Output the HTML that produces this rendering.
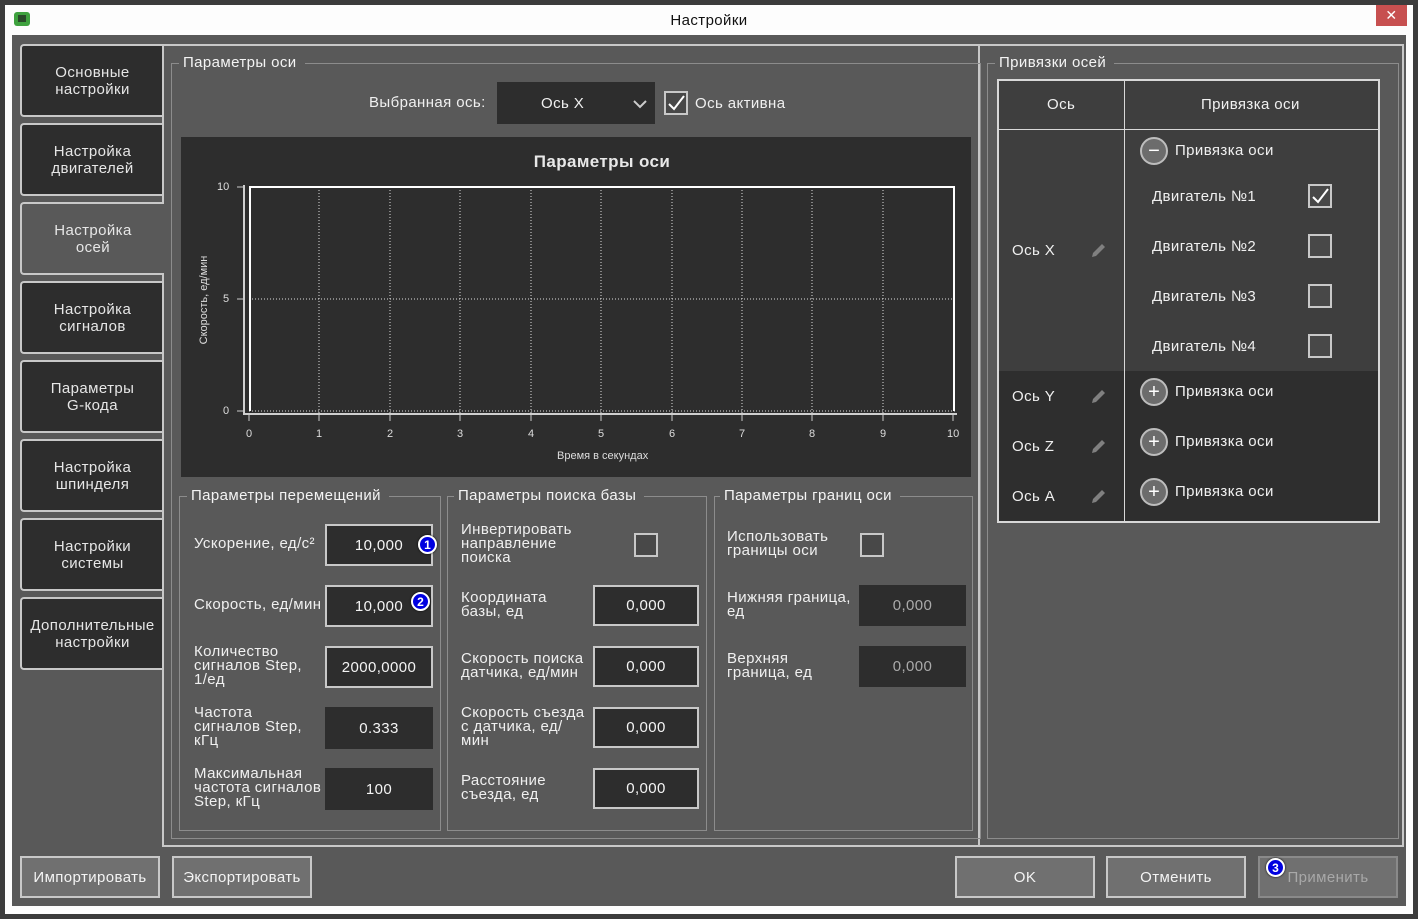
<!DOCTYPE html>
<html><head><meta charset="utf-8"><style>
*{margin:0;padding:0;box-sizing:border-box}
body{width:1418px;height:919px;background:#3c3c3c;font-family:"Liberation Sans","DejaVu Sans",sans-serif;font-size:15px;letter-spacing:0.4px;color:#f0f0f0;position:relative;overflow:hidden}
.a{position:absolute}
.tab{position:absolute;left:20px;width:143px;height:73px;background:#2d2d2d;border:2px solid #c8c8c8;border-right:none;border-radius:4px 0 0 4px;display:flex;align-items:center;justify-content:center;text-align:center;line-height:17px;color:#e6e6e6}
.gb{position:absolute;border:1px solid #8c8c8c}
.gt{position:absolute;background:#595959;padding:0 8px 0 4px;font-size:15px;color:#f4f4f4;line-height:16px}
.lbl{position:absolute;line-height:14px;font-size:15px;color:#f0f0f0;white-space:nowrap}
.inp{position:absolute;background:#2d2d2d;border:2px solid #c8c8c8;display:flex;align-items:center;justify-content:center;font-size:15px;color:#f4f4f4}
.dis{border:none;}
.cb{position:absolute;width:24px;height:24px;border:2px solid #c8c8c8;background:#484848}
.btn{position:absolute;top:856px;width:140px;height:42px;background:#707070;border:2px solid #c8c8c8;display:flex;align-items:center;justify-content:center;color:#f4f4f4;font-size:15px}
.badge{position:absolute;width:19px;height:19px;border-radius:50%;background:#0000e0;border:2px solid #fff;color:#fff;font-size:12px;letter-spacing:0;font-weight:bold;display:flex;align-items:center;justify-content:center;box-shadow:0 0 2px #000}
.ax{position:absolute;font-size:11px;letter-spacing:0;color:#ddd}
.rc{position:absolute;width:28px;height:28px;border-radius:50%;border:2px solid #bdbdbd;background:#6c6c6c;color:#fff;font-size:20px;letter-spacing:0;display:flex;align-items:center;justify-content:center;line-height:1}
</style></head><body>
<div class="a" style="left:5px;top:5px;width:1408px;height:909px;background:#fdfdfd"></div>
<div class="a" style="left:14px;top:12px;width:16px;height:14px;background:#3fa23f;border-radius:3px"></div>
<div class="a" style="left:18px;top:15px;width:8px;height:7px;background:#2a4a2a"></div>
<div class="a" style="left:0;top:12px;width:1418px;text-align:center;font-size:15px;color:#111">Настройки</div>
<div class="a" style="left:1376px;top:5px;width:31px;height:21px;background:#c75050;color:#fff;font-size:14px;font-weight:bold;text-align:center;line-height:21px">✕</div>
<div class="a" style="left:12px;top:35px;width:1394px;height:871px;background:#595959"></div>

<div class="tab" style="top:44px">Основные<br>настройки</div>
<div class="tab" style="top:123px">Настройка<br>двигателей</div>
<div class="tab" style="top:281px">Настройка<br>сигналов</div>
<div class="tab" style="top:360px">Параметры<br>G-кода</div>
<div class="tab" style="top:439px">Настройка<br>шпинделя</div>
<div class="tab" style="top:518px">Настройки<br>системы</div>
<div class="tab" style="top:597px">Дополнительные<br>настройки</div>

<div class="a" style="left:162px;top:44px;width:818px;height:803px;border:2px solid #c8c8c8"></div>
<div class="a" style="left:980px;top:44px;width:424px;height:803px;border:2px solid #c8c8c8;border-left:none"></div>
<div class="tab" style="top:202px;background:#595959;width:144px">Настройка<br>осей</div>

<div class="gb" style="left:171px;top:63px;width:810px;height:776px"></div>
<div class="gt" style="left:179px;top:55px">Параметры оси</div>
<div class="lbl" style="left:369px;top:96px">Выбранная ось:</div>
<div class="a" style="left:497px;top:82px;width:158px;height:42px;background:#2d2d2d"></div>
<div class="lbl" style="left:541px;top:97px">Ось X</div>
<svg class="a" style="left:632px;top:98px" width="16" height="12"><path d="M2 3 L8 9 L14 3" stroke="#ccc" stroke-width="2" fill="none"/></svg>
<div class="cb" style="left:664px;top:91px"><svg width="20" height="20" style="position:absolute;left:0;top:0"><path d="M3 11 L8 16 L18 3" stroke="#fff" stroke-width="2" fill="none"/></svg></div>
<div class="lbl" style="left:695px;top:97px">Ось активна</div>

<div class="a" style="left:181px;top:137px;width:790px;height:340px;background:#2d2d2d"></div>
<div class="a" style="left:181px;top:152px;width:842px;text-align:center;font-weight:bold;font-size:17px;color:#e8e8e8">Параметры оси</div>
<svg class="a" style="left:181px;top:137px" width="790" height="340">
<g stroke="#ddd" stroke-width="1" stroke-dasharray="1,2" fill="none">
<line x1="68" y1="50" x2="774" y2="50"/><line x1="68" y1="162" x2="774" y2="162"/><line x1="68" y1="274" x2="774" y2="274"/>
<line x1="138" y1="50" x2="138" y2="276"/><line x1="209" y1="50" x2="209" y2="276"/><line x1="279" y1="50" x2="279" y2="276"/><line x1="350" y1="50" x2="350" y2="276"/><line x1="420" y1="50" x2="420" y2="276"/><line x1="491" y1="50" x2="491" y2="276"/><line x1="561" y1="50" x2="561" y2="276"/><line x1="631" y1="50" x2="631" y2="276"/><line x1="702" y1="50" x2="702" y2="276"/>
</g>
<g stroke="#cfcfcf" stroke-width="2" fill="none"><line x1="63" y1="48" x2="63" y2="278"/><line x1="62" y1="277" x2="776" y2="277"/></g>
<g stroke="#ccc" stroke-width="1"><line x1="56" y1="50" x2="63" y2="50"/><line x1="56" y1="162" x2="63" y2="162"/><line x1="56" y1="274" x2="63" y2="274"/>
<line x1="68" y1="278" x2="68" y2="284"/><line x1="138" y1="278" x2="138" y2="284"/><line x1="209" y1="278" x2="209" y2="284"/><line x1="279" y1="278" x2="279" y2="284"/><line x1="350" y1="278" x2="350" y2="284"/><line x1="420" y1="278" x2="420" y2="284"/><line x1="491" y1="278" x2="491" y2="284"/><line x1="561" y1="278" x2="561" y2="284"/><line x1="631" y1="278" x2="631" y2="284"/><line x1="702" y1="278" x2="702" y2="284"/><line x1="772" y1="278" x2="772" y2="284"/></g>
<path d="M69 274 L69 50 L773 50 L773 274" stroke="#fff" stroke-width="2" fill="none"/>
</svg>
<div class="ax" style="left:217px;top:181px">10</div>
<div class="ax" style="left:223px;top:293px">5</div>
<div class="ax" style="left:223px;top:405px">0</div>
<div class="ax" style="left:246px;top:428px">0</div><div class="ax" style="left:316px;top:428px">1</div><div class="ax" style="left:387px;top:428px">2</div><div class="ax" style="left:457px;top:428px">3</div><div class="ax" style="left:528px;top:428px">4</div><div class="ax" style="left:598px;top:428px">5</div><div class="ax" style="left:669px;top:428px">6</div><div class="ax" style="left:739px;top:428px">7</div><div class="ax" style="left:809px;top:428px">8</div><div class="ax" style="left:880px;top:428px">9</div><div class="ax" style="left:947px;top:428px">10</div>
<div class="ax" style="left:557px;top:450px">Время в секундах</div>
<div class="ax" style="left:144px;top:294px;width:120px;text-align:center;transform:rotate(-90deg)">Скорость, ед/мин</div>

<div class="gb" style="left:179px;top:496px;width:262px;height:335px"></div>
<div class="gt" style="left:187px;top:488px">Параметры перемещений</div>
<div class="lbl" style="left:194px;top:537px">Ускорение, ед/с²</div>
<div class="inp" style="left:325px;top:524px;width:108px;height:42px">10,000</div>
<div class="lbl" style="left:194px;top:598px">Скорость, ед/мин</div>
<div class="inp" style="left:325px;top:585px;width:108px;height:42px">10,000</div>
<div class="lbl" style="left:194px;top:645px">Количество<br>сигналов Step,<br>1/ед</div>
<div class="inp" style="left:325px;top:646px;width:108px;height:42px">2000,0000</div>
<div class="lbl" style="left:194px;top:706px">Частота<br>сигналов Step,<br>кГц</div>
<div class="inp dis" style="left:325px;top:707px;width:108px;height:42px">0.333</div>
<div class="lbl" style="left:194px;top:767px">Максимальная<br>частота сигналов<br>Step, кГц</div>
<div class="inp dis" style="left:325px;top:768px;width:108px;height:42px">100</div>
<div class="badge" style="left:418px;top:535px">1</div>
<div class="badge" style="left:411px;top:592px">2</div>

<div class="gb" style="left:447px;top:496px;width:260px;height:335px"></div>
<div class="gt" style="left:454px;top:488px">Параметры поиска базы</div>
<div class="lbl" style="left:461px;top:523px">Инвертировать<br>направление<br>поиска</div>
<div class="cb" style="left:634px;top:533px"></div>
<div class="lbl" style="left:461px;top:591px">Координата<br>базы, ед</div>
<div class="inp" style="left:593px;top:585px;width:106px;height:41px">0,000</div>
<div class="lbl" style="left:461px;top:652px">Скорость поиска<br>датчика, ед/мин</div>
<div class="inp" style="left:593px;top:646px;width:106px;height:41px">0,000</div>
<div class="lbl" style="left:461px;top:706px">Скорость съезда<br>с датчика, ед/<br>мин</div>
<div class="inp" style="left:593px;top:707px;width:106px;height:41px">0,000</div>
<div class="lbl" style="left:461px;top:774px">Расстояние<br>съезда, ед</div>
<div class="inp" style="left:593px;top:768px;width:106px;height:41px">0,000</div>

<div class="gb" style="left:714px;top:496px;width:259px;height:335px"></div>
<div class="gt" style="left:720px;top:488px">Параметры границ оси</div>
<div class="lbl" style="left:727px;top:530px">Использовать<br>границы оси</div>
<div class="cb" style="left:860px;top:533px"></div>
<div class="lbl" style="left:727px;top:591px">Нижняя граница,<br>ед</div>
<div class="inp dis" style="left:859px;top:585px;width:107px;height:41px;color:#aaa">0,000</div>
<div class="lbl" style="left:727px;top:652px">Верхняя<br>граница, ед</div>
<div class="inp dis" style="left:859px;top:646px;width:107px;height:41px;color:#aaa">0,000</div>

<div class="gb" style="left:987px;top:63px;width:412px;height:776px"></div>
<div class="gt" style="left:995px;top:55px">Привязки осей</div>
<div class="a" style="left:997px;top:79px;width:383px;height:444px;border:2px solid #d8d8d8;background:#3e3e3e"></div>
<div class="a" style="left:999px;top:371px;width:379px;height:150px;background:#2e2e2e"></div>
<div class="a" style="left:1124px;top:81px;width:1px;height:440px;background:#d8d8d8"></div>
<div class="a" style="left:999px;top:129px;width:379px;height:1px;background:#d8d8d8"></div>
<div class="lbl" style="left:1047px;top:98px">Ось</div>
<div class="lbl" style="left:1201px;top:98px">Привязка оси</div>
<div class="rc" style="left:1140px;top:137px">−</div>
<div class="lbl" style="left:1175px;top:144px">Привязка оси</div>
<div class="lbl" style="left:1152px;top:190px">Двигатель №1</div>
<div class="cb" style="left:1308px;top:184px"><svg width="20" height="20" style="position:absolute;left:0;top:0"><path d="M3 11 L8 16 L18 3" stroke="#fff" stroke-width="2" fill="none"/></svg></div>
<div class="lbl" style="left:1152px;top:240px">Двигатель №2</div><div class="cb" style="left:1308px;top:234px"></div>
<div class="lbl" style="left:1152px;top:290px">Двигатель №3</div><div class="cb" style="left:1308px;top:284px"></div>
<div class="lbl" style="left:1152px;top:340px">Двигатель №4</div><div class="cb" style="left:1308px;top:334px"></div>
<div class="lbl" style="left:1012px;top:244px">Ось X</div>
<div class="lbl" style="left:1012px;top:390px">Ось Y</div>
<div class="lbl" style="left:1012px;top:440px">Ось Z</div>
<div class="lbl" style="left:1012px;top:490px">Ось A</div>
<svg class="a" style="left:1090px;top:243px" width="18" height="16"><path d="M2 14 L3 10 L12 1 L15 4 L6 13 Z" fill="#808080"/></svg>
<svg class="a" style="left:1090px;top:389px" width="18" height="16"><path d="M2 14 L3 10 L12 1 L15 4 L6 13 Z" fill="#808080"/></svg>
<svg class="a" style="left:1090px;top:439px" width="18" height="16"><path d="M2 14 L3 10 L12 1 L15 4 L6 13 Z" fill="#808080"/></svg>
<svg class="a" style="left:1090px;top:489px" width="18" height="16"><path d="M2 14 L3 10 L12 1 L15 4 L6 13 Z" fill="#808080"/></svg>
<div class="rc" style="left:1140px;top:378px">+</div><div class="lbl" style="left:1175px;top:385px">Привязка оси</div>
<div class="rc" style="left:1140px;top:428px">+</div><div class="lbl" style="left:1175px;top:435px">Привязка оси</div>
<div class="rc" style="left:1140px;top:478px">+</div><div class="lbl" style="left:1175px;top:485px">Привязка оси</div>

<div class="btn" style="left:20px">Импортировать</div>
<div class="btn" style="left:172px">Экспортировать</div>
<div class="btn" style="left:955px">OK</div>
<div class="btn" style="left:1106px">Отменить</div>
<div class="btn" style="left:1258px;color:#a8a8a8;border-color:#8a8a8a">Применить</div>
<div class="badge" style="left:1266px;top:858px">3</div>
</body></html>
